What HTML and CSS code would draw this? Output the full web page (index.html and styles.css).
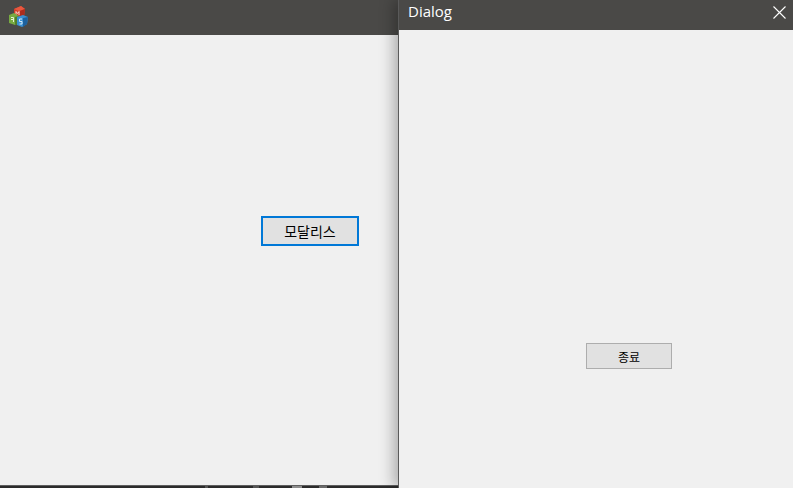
FILE: index.html
```html
<!DOCTYPE html>
<html lang="ko">
<head>
    <meta charset="UTF-8">
    <meta name="viewport" content="width=device-width, initial-scale=1.0">
    <title>Dialog</title>
    <link rel="stylesheet" href="styles.css">
</head>
<body>
    <div class="desktop">
        <div class="main-window">
            <div class="main-title">
                <svg class="app-icon" width="20" height="21" viewBox="9 6 20 21">
                    <!-- red cube -->
                    <polygon points="14,9 21,6 25,9 24,17 19,19 14,16" fill="#d63c28"/>
                    <polygon points="14,9 21,6 25,9 19,11" fill="#e8583f"/>
                    <polygon points="20,11 25,9 24,17 20,19" fill="#ad2c1c"/>
                    <path d="M16 15V11.5L17.5 13.5L19 11.5V15" stroke="#f6d5cd" stroke-width="1" fill="none"/>
                    <!-- green cube -->
                    <polygon points="9,15 14,13 19,16 19,23 15,25 9,23" fill="#78aa42"/>
                    <polygon points="15,17 19,16 19,23 15,25" fill="#507f2a"/>
                    <path d="M14 22V17.5H11.5M14 19.5H11.5" transform="translate(-0.5 0)" stroke="#e4efd2" stroke-width="1" fill="none"/>
                    <!-- blue cube -->
                    <polygon points="17,17 23,15 28,17 27,24 22,27 17,25" fill="#3a90d2"/>
                    <polygon points="23,18 28,17 27,24 23,27" fill="#1d619e"/>
                    <path d="M22 19H19.5V21.5H22V24H19.5" stroke="#d6e9f7" stroke-width="1" fill="none"/>
                </svg>
            </div>
            <div class="main-body">
                <button class="btn btn-focus" type="button">모달리스</button>
            </div>
            <div class="taskbar">
                <span class="speck speck-a"></span>
                <span class="speck speck-b"></span>
                <span class="speck speck-c"></span>
                <span class="speck speck-d"></span>
            </div>
        </div>
        <div class="dialog">
            <div class="dialog-title">
                <span class="dialog-name">Dialog</span>
                <svg class="close-icon" width="13" height="13" viewBox="0 0 13 13">
                    <path d="M0.5 0.5L12.5 12.5M12.5 0.5L0.5 12.5" stroke="#ffffff" stroke-width="1.1" fill="none"/>
                </svg>
            </div>
            <div class="dialog-body">
                <button class="btn btn-close" type="button">종료</button>
            </div>
        </div>
    </div>
</body>
</html>
```

FILE: styles.css
```css
html, body {
    margin: 0;
    padding: 0;
    height: 488px;
    overflow: hidden;
}
body {
    background-color: #2b2b2b;
    font-family: "Noto Sans CJK KR", "Noto Sans", sans-serif;
}
.desktop {
    display: flex;
    width: 793px;
    height: 488px;
}
.main-window {
    width: 398px;
    display: flex;
    flex-direction: column;
}
.main-title {
    height: 35px;
    box-sizing: border-box;
    background-color: #4a4947;
    padding: 6px 0 0 9px;
    flex-shrink: 0;
}
.app-icon {
    display: block;
}
.main-body {
    flex: 1;
    background-color: #f0f0f0;
    padding: 181px 0 0 261px;
    box-sizing: border-box;
}
.dialog {
    flex: 1;
    display: flex;
    flex-direction: column;
    background-color: #f0f0f0;
    border-left: 1px solid #5a5a5a;
    box-shadow: -4px 0 14px rgba(0, 0, 0, 0.3);
    position: relative;
}
.dialog-title {
    height: 30px;
    background-color: #4a4947;
    color: #ffffff;
    display: flex;
    align-items: center;
    justify-content: space-between;
    padding: 0 7px 0 9px;
    flex-shrink: 0;
}
.dialog-name {
    font-family: "Open Sans", sans-serif;
    font-size: 15px;
    line-height: 24px;
    margin-top: -8px;
}
.close-icon {
    margin-top: -6px;
}
.dialog-body {
    flex: 1;
    padding: 313px 0 0 187px;
}
.btn {
    display: block;
    box-sizing: border-box;
    background-color: #e1e1e1;
    color: #000000;
    font-family: "Noto Sans CJK KR", sans-serif;
    padding: 0;
    border-radius: 0;
}
.btn-focus {
    width: 98px;
    height: 30px;
    border: 2px solid #0078d7;
    font-size: 14px;
}
.btn-close {
    width: 86px;
    height: 26px;
    border: 1px solid #adadad;
    font-size: 12px;
}
.taskbar {
    height: 3px;
    box-sizing: border-box;
    background-color: #2b2b2b;
    border-top: 1px solid #5e5e5e;
    display: flex;
    padding-left: 205px;
    flex-shrink: 0;
}
.speck {
    height: 2px;
    background-color: #555555;
}
.speck-a {
    width: 3px;
}
.speck-b {
    width: 6px;
    margin-left: 45px;
}
.speck-c {
    width: 10px;
    margin-left: 33px;
    background-color: #8e8e8e;
}
.speck-d {
    width: 8px;
    margin-left: 17px;
    background-color: #6a6a6a;
}
```
